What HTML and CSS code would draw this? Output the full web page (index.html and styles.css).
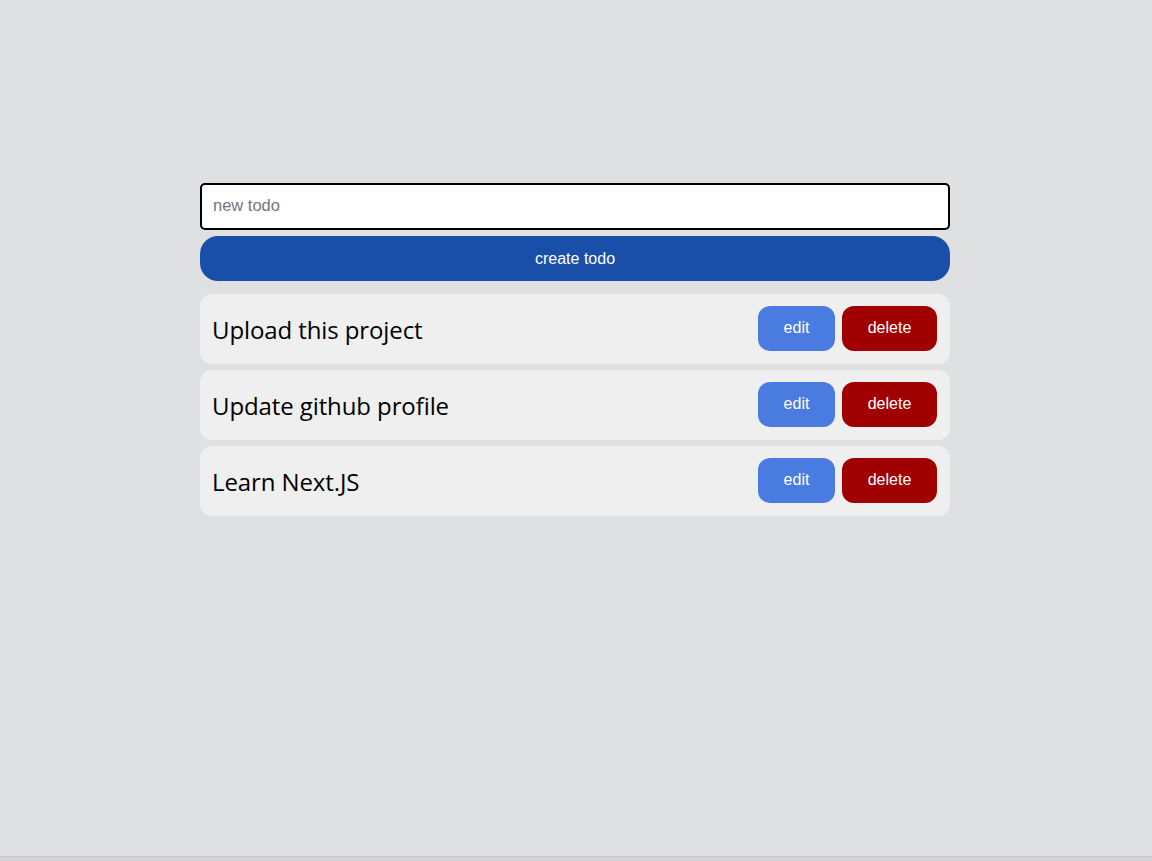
FILE: index.html
```html
<!DOCTYPE html>
<html lang="en">
<head>
<meta charset="utf-8">
<title>Todos</title>
<link rel="stylesheet" href="styles.css">
</head>
<body>
<main class="page">
  <section class="todo-app">
    <form class="new-form">
      <input class="new-input" type="text" placeholder="new todo" autofocus>
      <button class="create-btn" type="button">create todo</button>
    </form>
    <ul class="todo-list">
      <li class="todo-item">
        <span class="todo-text">Upload this project</span>
        <div class="actions">
          <button class="btn edit" type="button">edit</button>
          <button class="btn delete" type="button">delete</button>
        </div>
      </li>
      <li class="todo-item">
        <span class="todo-text">Update github profile</span>
        <div class="actions">
          <button class="btn edit" type="button">edit</button>
          <button class="btn delete" type="button">delete</button>
        </div>
      </li>
      <li class="todo-item">
        <span class="todo-text">Learn Next.JS</span>
        <div class="actions">
          <button class="btn edit" type="button">edit</button>
          <button class="btn delete" type="button">delete</button>
        </div>
      </li>
    </ul>
  </section>
</main>
<div class="bottom-bar"></div>
</body>
</html>
```

FILE: styles.css
```css
html, body {
  margin: 0;
  padding: 0;
  height: 100%;
}
body {
  background: #dfe0e2;
  font-family: "Liberation Sans", Arial, sans-serif;
  display: flex;
  flex-direction: column;
}
.page {
  flex: 1;
  display: flex;
  justify-content: center;
  padding-top: 183px;
  padding-right: 2px;
}
.todo-app {
  width: 750px;
}
.new-form {
  display: flex;
  flex-direction: column;
  gap: 6px;
  margin: 0 0 13px;
}
.new-input {
  box-sizing: border-box;
  height: 47px;
  width: 100%;
  border: 2px solid #000;
  border-radius: 5px;
  background: #fff;
  padding: 0 11px 2px;
  font-family: "Liberation Sans", Arial, sans-serif;
  font-size: 16.5px;
  color: #000;
  outline: none;
  caret-color: #000;
}
.new-input::placeholder {
  color: #757575;
}
.create-btn {
  height: 45px;
  width: 100%;
  border: none;
  border-radius: 18px;
  background: #1a4fa9;
  color: #fff;
  font-family: "Liberation Sans", Arial, sans-serif;
  font-size: 16px;
  padding: 0;
  cursor: pointer;
}
.todo-list {
  list-style: none;
  margin: 0;
  padding: 0;
  display: flex;
  flex-direction: column;
  gap: 6px;
}
.todo-item {
  box-sizing: border-box;
  height: 70px;
  background: #efefef;
  border-radius: 12px;
  display: flex;
  align-items: center;
  justify-content: space-between;
  padding: 0 13px 0 12px;
}
.todo-text {
  font-family: "Open Sans", "Noto Sans", sans-serif;
  font-size: 24px;
  color: #000;
  letter-spacing: -0.1px;
  margin-top: 1px;
}
.actions {
  display: flex;
  gap: 7px;
  margin-bottom: 2px;
}
.btn {
  height: 45px;
  border: none;
  border-radius: 12px;
  color: #fff;
  font-family: "Liberation Sans", Arial, sans-serif;
  font-size: 16px;
  padding: 0;
  cursor: pointer;
}
.btn.edit {
  width: 77px;
  background: #4a7be0;
}
.btn.delete {
  width: 95px;
  background: #a00000;
}
.bottom-bar {
  height: 4px;
  background: #d3d3d5;
  border-top: 1px solid #c8c9cb;
}
```
